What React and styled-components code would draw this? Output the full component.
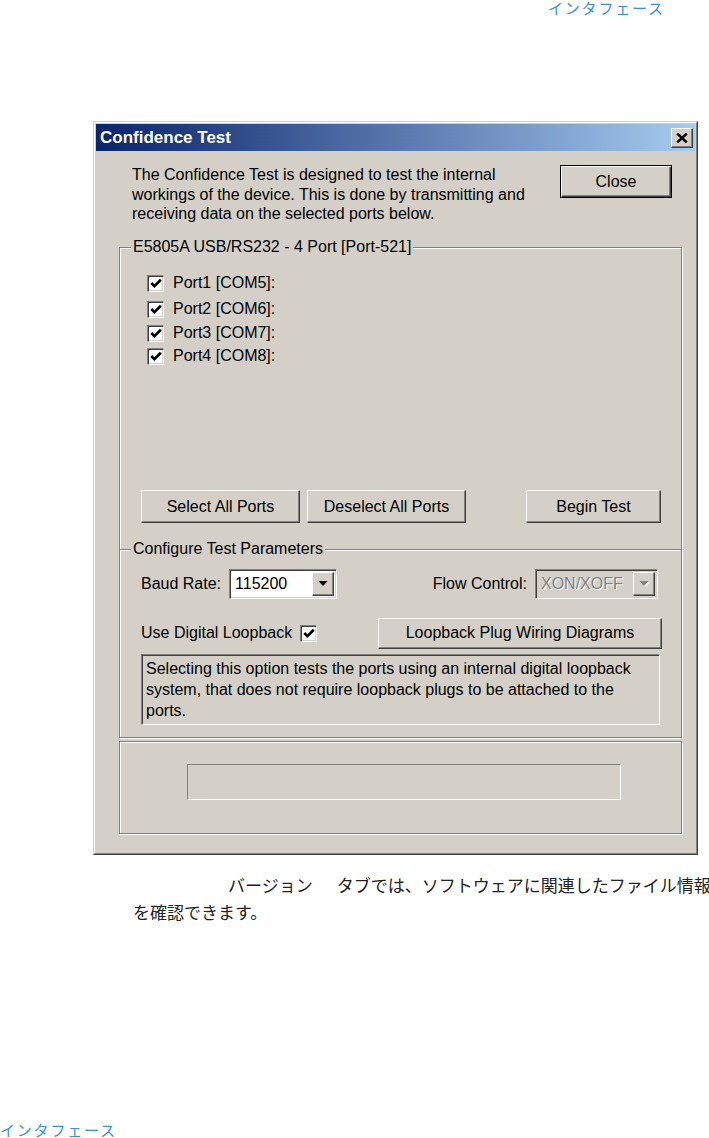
import React from "react";
import styled, { createGlobalStyle, css } from "styled-components";

const GlobalStyle = createGlobalStyle`
  html, body {
    margin: 0;
    padding: 0;
    background: #fff;
  }
  * {
    box-sizing: border-box;
  }
`;

const ports = [
  { label: "Port1 [COM5]:", top: 27 },
  { label: "Port2 [COM6]:", top: 10 },
  { label: "Port3 [COM7]:", top: 8 },
  { label: "Port4 [COM8]:", top: 7 },
];

const CheckMark = () => (
  <svg width="12" height="11" viewBox="0 0 12 11">
    <polyline
      points="1.3,5 4.4,8.1 10.8,1.7"
      fill="none"
      stroke="#000"
      strokeWidth="2.7"
      strokeLinejoin="miter"
      strokeLinecap="butt"
    />
  </svg>
);

const DownArrow = ({ disabled }) => (
  <svg width="11" height="6" viewBox="0 0 11 6">
    {disabled && <polygon points="2,1 11,1 6.5,6" fill="#fff" />}
    <polygon points="0.5,0 9.5,0 5,5" fill={disabled ? "#808080" : "#000"} />
  </svg>
);

const Combo = ({ value, width, disabled }) => (
  <ComboBox $width={width} $disabled={disabled}>
    <ComboValue $disabled={disabled}>{value}</ComboValue>
    <ComboButton>
      <DownArrow disabled={disabled} />
    </ComboButton>
  </ComboBox>
);

const Check = () => (
  <CheckBox>
    <CheckMark />
  </CheckBox>
);

export default function App() {
  return (
    <>
      <GlobalStyle />
      <Page>
        <RunningHead>インタフェース</RunningHead>

        <Window>
          <TitleBar>
            <TitleText>Confidence Test</TitleText>
            <TitleClose aria-label="Close">
              <svg width="12" height="10" viewBox="0 0 12 10">
                <path d="M1.2 0.6 L10.8 9.4 M10.8 0.6 L1.2 9.4" stroke="#000" strokeWidth="2.6" />
              </svg>
            </TitleClose>
          </TitleBar>

          <Content>
            <TopRow>
              <Intro>
                The Confidence Test is designed to test the internal
                <br />
                workings of the device. This is done by transmitting and
                <br />
                receiving data on the selected ports below.
              </Intro>
              <DefaultButton $width={112} $height={33}>Close</DefaultButton>
            </TopRow>

            <PortsGroup>
              <Legend>E5805A USB/RS232 - 4 Port [Port-521]</Legend>
              <PortList>
                {ports.map((p) => (
                  <PortRow key={p.label} $top={p.top}>
                    <Check />
                    <PortLabel>{p.label}</PortLabel>
                  </PortRow>
                ))}
              </PortList>
              <ActionRow>
                <Button $width={159} $height={33}>Select All Ports</Button>
                <Button $width={159} $height={33}>Deselect All Ports</Button>
                <Spacer />
                <Button $width={135} $height={33}>Begin Test</Button>
              </ActionRow>
            </PortsGroup>

            <ParamsGroup>
              <Legend>Configure Test Parameters</Legend>
              <ParamRow $top={19}>
                <FieldLabel>Baud Rate:</FieldLabel>
                <Combo value="115200" width={108} />
                <Spacer />
                <FieldLabel>Flow Control:</FieldLabel>
                <Combo value="XON/XOFF" width={123} disabled />
              </ParamRow>
              <ParamRow $top={19}>
                <FieldLabel>Use Digital Loopback</FieldLabel>
                <Check />
                <Spacer />
                <Button $width={284} $height={31}>Loopback Plug Wiring Diagrams</Button>
              </ParamRow>
              <InfoBox>
                Selecting this option tests the ports using an internal digital loopback
                system, that does not require loopback plugs to be attached to the
                ports.
              </InfoBox>
            </ParamsGroup>

            <StatusGroup>
              <ProgressWell />
            </StatusGroup>
          </Content>
        </Window>

        <Paragraph>
          <FirstLine>
            <Term>バージョン</Term>タブでは、ソフトウェアに関連したファイル情報
          </FirstLine>
          <div>を確認できます。</div>
        </Paragraph>

        <RunningFoot>インタフェース</RunningFoot>
      </Page>
    </>
  );
}

const uiFont = css`
  font-family: "Liberation Sans", Arial, sans-serif;
  font-size: 16px;
  color: #000;
`;

const raised = css`
  border: 1px solid;
  border-color: #fff #404040 #404040 #fff;
  box-shadow: inset -1px -1px 0 #808080, inset 1px 1px 0 #d4d0c8;
  background: #d4d0c8;
`;

const sunken = css`
  border: 1px solid;
  border-color: #808080 #fff #fff #808080;
  box-shadow: inset 1px 1px 0 #404040, inset -1px -1px 0 #d4d0c8;
`;

const etched = css`
  position: relative;
  border: 1px solid #808080;
  box-shadow: inset 1px 1px 0 #fff, 1px 1px 0 #fff;
`;

const Page = styled.div`
  width: 709px;
  min-height: 1138px;
  display: flex;
  flex-direction: column;
`;

const RunningHead = styled.div`
  height: 16px;
  line-height: 16px;
  padding-left: 548px;
  font-family: "Noto Sans CJK JP", sans-serif;
  font-size: 15px;
  letter-spacing: 1.8px;
  color: #3a8fdc;
  white-space: nowrap;
`;

const RunningFoot = styled(RunningHead)`
  margin-top: auto;
  padding-left: 0;
`;

const Window = styled.div`
  margin: 105px 0 0 93px;
  width: 605px;
  height: 734px;
  padding: 2px;
  background: #d4d0c8;
  border: 1px solid;
  border-color: #d4d0c8 #404040 #404040 #d4d0c8;
  box-shadow: inset 1px 1px 0 #fff, inset -1px -1px 0 #808080;
  display: flex;
  flex-direction: column;
`;

const TitleBar = styled.div`
  height: 27px;
  flex: none;
  display: flex;
  align-items: center;
  justify-content: space-between;
  padding: 0 2px 0 4px;
  background: linear-gradient(to right, #0a246a, #a6caf0);
`;

const TitleText = styled.span`
  font-family: "Liberation Sans", Arial, sans-serif;
  font-weight: bold;
  font-size: 17px;
  color: #fff;
`;

const TitleClose = styled.button`
  ${raised};
  width: 22px;
  height: 20px;
  padding: 0;
  display: flex;
  align-items: center;
  justify-content: center;
`;

const Content = styled.div`
  flex: 1;
  padding: 0 13px 0 23px;
  display: flex;
  flex-direction: column;
`;

const TopRow = styled.div`
  height: 96px;
  flex: none;
  padding: 14px 10px 0 13px;
  display: flex;
  justify-content: space-between;
  align-items: flex-start;
`;

const Intro = styled.p`
  ${uiFont};
  margin: 0;
  line-height: 19.5px;
  white-space: nowrap;
`;

const Button = styled.button`
  ${raised};
  ${uiFont};
  width: ${({ $width }) => $width}px;
  height: ${({ $height }) => $height}px;
  flex: none;
  padding: 0;
`;

const DefaultButton = styled(Button)`
  border: 1px solid #000;
  box-shadow: inset 1px 1px 0 #fff, inset -1px -1px 0 #404040,
    inset -2px -2px 0 #808080;
`;

const Legend = styled.span`
  ${uiFont};
  position: absolute;
  top: -11px;
  left: 11px;
  padding: 0 2px;
  line-height: 20px;
  background: #d4d0c8;
`;

const PortsGroup = styled.div`
  ${etched};
  border-bottom: 0;
  height: 302px;
  flex: none;
  display: flex;
  flex-direction: column;
`;

const PortList = styled.div`
  flex: 1;
  padding-left: 27px;
`;

const PortRow = styled.div`
  margin-top: ${({ $top }) => $top}px;
  height: 16px;
  display: flex;
  align-items: center;
`;

const CheckBox = styled.span`
  ${sunken};
  width: 17px;
  height: 17px;
  flex: none;
  background: #fff;
  display: flex;
  align-items: center;
  justify-content: center;
`;

const PortLabel = styled.span`
  ${uiFont};
  margin-left: 9px;
  line-height: 16px;
`;

const ActionRow = styled.div`
  display: flex;
  gap: 7px;
  padding: 0 20px 26px 21px;
`;

const Spacer = styled.div`
  flex: 1;
`;

const ParamsGroup = styled.div`
  ${etched};
  height: 189px;
  flex: none;
  padding: 0 19px 0 21px;
`;

const ParamRow = styled.div`
  margin-top: ${({ $top }) => $top}px;
  height: 30px;
  display: flex;
  align-items: center;
  gap: 8px;
`;

const FieldLabel = styled.span`
  ${uiFont};
  white-space: nowrap;
`;

const ComboBox = styled.div`
  ${sunken};
  width: ${({ $width }) => $width}px;
  height: 30px;
  flex: none;
  display: flex;
  align-items: stretch;
  padding: 2px;
  background: ${({ $disabled }) => ($disabled ? "#d4d0c8" : "#fff")};
  margin-right: ${({ $disabled }) => ($disabled ? "4px" : "0")};
`;

const ComboValue = styled.span`
  ${uiFont};
  flex: 1;
  display: flex;
  align-items: center;
  padding-left: 3px;
  ${({ $disabled }) =>
    $disabled &&
    css`
      color: #808080;
      text-shadow: 1px 1px 0 #fff;
    `}
`;

const ComboButton = styled.span`
  ${raised};
  width: 22px;
  flex: none;
  display: flex;
  align-items: center;
  justify-content: center;
`;

const InfoBox = styled.div`
  ${sunken};
  ${uiFont};
  margin: 6px 2px 0 0;
  height: 71px;
  padding: 3px 4px;
  line-height: 21px;
  background: #d4d0c8;
`;

const StatusGroup = styled.div`
  ${etched};
  margin-top: 3px;
  height: 93px;
  flex: none;
  padding: 22px 0 0 67px;
`;

const ProgressWell = styled.div`
  width: 434px;
  height: 36px;
  border: 1px solid;
  border-color: #808080 #fff #fff #808080;
`;

const Paragraph = styled.div`
  margin-top: 18px;
  padding-left: 133px;
  font-family: "Liberation Serif", "Noto Sans CJK JP", serif;
  font-size: 17px;
  line-height: 27px;
  color: #222;
`;

const FirstLine = styled.div`
  padding-left: 95px;
  white-space: nowrap;
`;

const Term = styled.span`
  margin-right: 24px;
`;
